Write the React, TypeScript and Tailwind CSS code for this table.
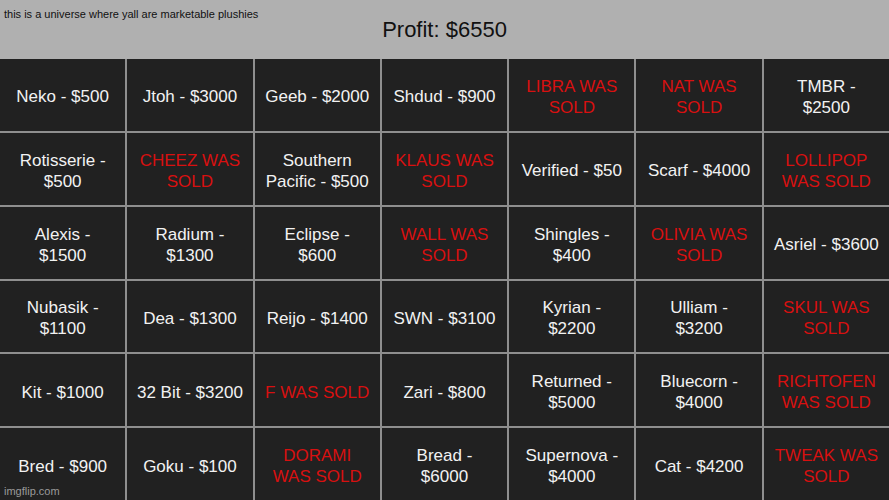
const cells: [string, boolean][] = [
  ["Neko - $500", false],
  ["Jtoh - $3000", false],
  ["Geeb - $2000", false],
  ["Shdud - $900", false],
  ["LIBRA WAS\nSOLD", true],
  ["NAT WAS\nSOLD", true],
  ["TMBR -\n$2500", false],
  ["Rotisserie -\n$500", false],
  ["CHEEZ WAS\nSOLD", true],
  ["Southern\nPacific - $500", false],
  ["KLAUS WAS\nSOLD", true],
  ["Verified - $50", false],
  ["Scarf - $4000", false],
  ["LOLLIPOP\nWAS SOLD", true],
  ["Alexis -\n$1500", false],
  ["Radium -\n$1300", false],
  ["Eclipse -\n$600", false],
  ["WALL WAS\nSOLD", true],
  ["Shingles -\n$400", false],
  ["OLIVIA WAS\nSOLD", true],
  ["Asriel - $3600", false],
  ["Nubasik -\n$1100", false],
  ["Dea - $1300", false],
  ["Reijo - $1400", false],
  ["SWN - $3100", false],
  ["Kyrian -\n$2200", false],
  ["Ulliam -\n$3200", false],
  ["SKUL WAS\nSOLD", true],
  ["Kit - $1000", false],
  ["32 Bit - $3200", false],
  ["F WAS SOLD", true],
  ["Zari - $800", false],
  ["Returned -\n$5000", false],
  ["Bluecorn -\n$4000", false],
  ["RICHTOFEN\nWAS SOLD", true],
  ["Bred - $900", false],
  ["Goku - $100", false],
  ["DORAMI\nWAS SOLD", true],
  ["Bread -\n$6000", false],
  ["Supernova -\n$4000", false],
  ["Cat - $4200", false],
  ["TWEAK WAS\nSOLD", true],
]

export default function App() {
  return (
    <div className="relative w-[889px] h-[500px] overflow-hidden bg-[#212121] font-['Liberation_Sans',Arial,sans-serif]">
      <header className="relative h-[59px] bg-[#b0b0b0] flex items-center justify-center">
        <p className="absolute left-[4px] top-[8px] text-[11px] leading-[13px] text-[#111]">
          this is a universe where yall are marketable plushies
        </p>
        <h1 className="text-[22px] leading-[24px] text-[#111] pt-[1px]">Profit: $6550</h1>
      </header>

      {/* 7 x 6 board, the gaps show as grid lines */}
      <div className="grid grid-cols-7 grid-rows-6 gap-[2px] h-[441px] bg-[#8f8f8f]">
        {cells.map(([label, sold], i) => (
          <div
            key={i}
            className={`bg-[#212121] flex items-center justify-center text-center whitespace-pre pt-[4px] text-[17px] leading-[21px] ${
              sold ? "text-[#d81010]" : "text-[#f2f2f2]"
            }`}
          >
            {label}
          </div>
        ))}
      </div>

      <span className="absolute left-[4px] bottom-[3px] text-[11px] leading-[12px] text-[#9a9a9a]">
        imgflip.com
      </span>
    </div>
  )
}
